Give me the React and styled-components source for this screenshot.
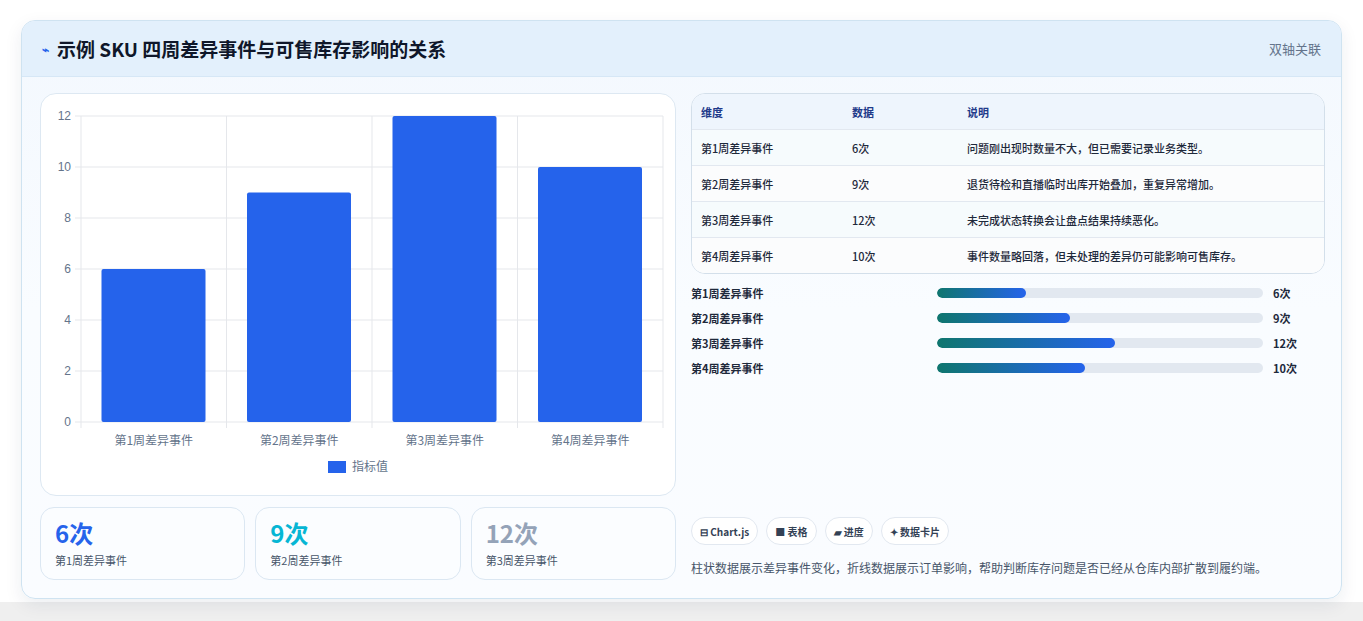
import React from "react";
import styled, { createGlobalStyle } from "styled-components";

const G = createGlobalStyle`
  body{margin:0;background:#fff;font-family:"Noto Sans CJK SC","Noto Sans",sans-serif;}
`;
const Page = styled.div`padding:20px 21px 22px 21px;background:linear-gradient(#fff 97%,#efefef 97%);`;
const Card = styled.div`
  border:1px solid #cfe3f1;border-radius:14px;overflow:hidden;
  background:linear-gradient(180deg,#f3f8fe,#f9fcff 50%,#fafcff);
  box-shadow:0 6px 18px rgba(15,40,80,.08);
`;
const Header = styled.div`
  height:55px;display:flex;align-items:center;justify-content:space-between;
  padding:0 20px;background:#e3f0fc;border-bottom:1px solid #d6e7f6;
`;
const Title = styled.h1`margin:0;font-size:19px;font-weight:700;color:#0f172a;display:flex;align-items:center;gap:8px;`;
const Tag = styled.span`font-size:13px;color:#64748b;`;
const Body = styled.div`display:grid;grid-template-columns:636px 634px;gap:15px;padding:16px 18px 18px 18px;`;
const Col = styled.div`display:flex;flex-direction:column;`;
const ChartBox = styled.div`height:403px;background:#fff;border:1px solid #dde8f2;border-radius:16px;box-sizing:border-box;`;
const Kpis = styled.div`display:grid;grid-template-columns:repeat(3,1fr);gap:10px;margin-top:11px;`;
const Kpi = styled.div`height:73px;box-sizing:border-box;border:1px solid #dbe7f2;border-radius:14px;background:#fbfdff;padding:10px 14px;`;
const KpiVal = styled.div`font-size:24px;font-weight:700;color:${p=>p.c};line-height:30px;`;
const KpiLbl = styled.div`font-size:11px;color:#475569;margin-top:4px;`;
const Table = styled.div`border:1px solid #d3dfea;border-radius:14px;overflow:hidden;background:#fff;`;
const Row = styled.div`display:grid;grid-template-columns:151px 115px 1fr;align-items:center;height:35px;padding:0 9px;
  font-size:11px;color:#1e293b;font-weight:${p=>p.h?600:500};
  background:${p=>p.h?"#eef5fd":p.alt?"#f6fbfd":"#fbfcfd"};
  border-top:${p=>p.first?"none":"1px solid #e2e8f0"};
  color:${p=>p.h?"#1e3a8a":"#1e293b"};
`;
const Bars = styled.div`display:flex;flex-direction:column;gap:9px;margin-top:11px;`;
const BarRow = styled.div`display:grid;grid-template-columns:236px 326px 1fr;align-items:center;column-gap:10px;font-size:11px;font-weight:600;color:#1e293b;height:16px;`;
const Track = styled.div`height:10px;border-radius:5px;background:#e2e8f0;overflow:hidden;`;
const Fill = styled.div`height:100%;border-radius:5px;background:linear-gradient(90deg,#0f766e,#2563eb);`;
const Chips = styled.div`display:flex;gap:8px;margin-top:auto;`;
const Chip = styled.span`height:26px;padding:0 8px;display:inline-flex;align-items:center;gap:4px;border:1px solid #e2e8f0;border-radius:14px;background:#fff;font-size:10px;font-weight:600;color:#334155;`;
const Note = styled.p`margin:14px 0 4px;font-size:12px;color:#475569;`;

const weeks=["第1周差异事件","第2周差异事件","第3周差异事件","第4周差异事件"];
const vals=[6,9,12,10];
const notes=["问题刚出现时数量不大，但已需要记录业务类型。","退货待检和直播临时出库开始叠加，重复异常增加。","未完成状态转换会让盘点结果持续恶化。","事件数量略回落，但未处理的差异仍可能影响可售库存。"];

function Chart(){
  const x0=40,x1=622,y0=22,y1=328,cw=(x1-x0)/4;
  const y=v=>y1-(v/12)*(y1-y0);
  return <svg width="634" height="401" style={{display:"block"}}>
    {[0,2,4,6,8,10,12].map(v=><g key={v}>
      <line x1={x0-6} x2={x1} y1={y(v)} y2={y(v)} stroke="#e5e7eb"/>
      <text x={x0-10} y={y(v)+4} textAnchor="end" fontSize="12" fill="#64748b" fontFamily="Liberation Sans">{v}</text>
    </g>)}
    {[0,1,2,3,4].map(i=><line key={i} x1={x0+i*cw} x2={x0+i*cw} y1={y0} y2={y1+6} stroke="#e5e7eb"/>)}
    {vals.map((v,i)=><rect key={i} x={x0+i*cw+20.5} width={104} y={y(v)} height={y1-y(v)} rx="2" fill="#2563eb"/>)}
    {weeks.map((w,i)=><text key={i} x={x0+i*cw+cw/2} y={351} textAnchor="middle" fontSize="12" fill="#64748b">{w}</text>)}
    <rect x="287" y="367" width="18" height="12" fill="#2563eb"/>
    <text x="311" y="377" fontSize="12" fill="#64748b">指标值</text>
  </svg>;
}

export default function App(){
  return <Page><G/><Card>
    <Header>
      <Title><span style={{color:"#2563eb",fontSize:12}}>⌁</span>示例 SKU 四周差异事件与可售库存影响的关系</Title>
      <Tag>双轴关联</Tag>
    </Header>
    <Body>
      <Col>
        <ChartBox><Chart/></ChartBox>
        <Kpis>
          <Kpi><KpiVal c="#2563eb">6次</KpiVal><KpiLbl>第1周差异事件</KpiLbl></Kpi>
          <Kpi><KpiVal c="#06b6d4">9次</KpiVal><KpiLbl>第2周差异事件</KpiLbl></Kpi>
          <Kpi><KpiVal c="#94a3b8">12次</KpiVal><KpiLbl>第3周差异事件</KpiLbl></Kpi>
        </Kpis>
      </Col>
      <Col>
        <Table>
          <Row h first><span>维度</span><span>数据</span><span>说明</span></Row>
          {weeks.map((w,i)=><Row key={i} alt={i%2===0}><span>{w}</span><span>{vals[i]}次</span><span>{notes[i]}</span></Row>)}
        </Table>
        <Bars>
          {weeks.map((w,i)=><BarRow key={i}><span>{w}</span><Track><Fill style={{width:`${vals[i]/22*100}%`}}/></Track><span>{vals[i]}次</span></BarRow>)}
        </Bars>
        <Chips>
          <Chip>⊟ Chart.js</Chip><Chip>■ 表格</Chip><Chip>▰ 进度</Chip><Chip>✦ 数据卡片</Chip>
        </Chips>
        <Note>柱状数据展示差异事件变化，折线数据展示订单影响，帮助判断库存问题是否已经从仓库内部扩散到履约端。</Note>
      </Col>
    </Body>
  </Card></Page>;
}
